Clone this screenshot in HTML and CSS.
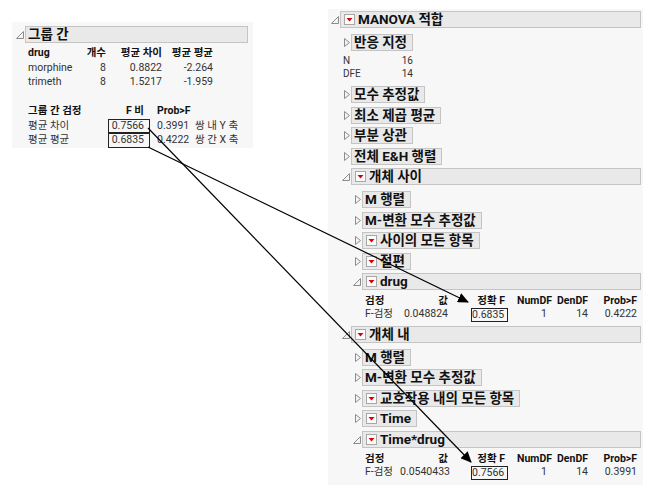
FILE: index.html
```html
<!DOCTYPE html>
<html lang="ko">
<head>
<meta charset="utf-8">
<title>MANOVA</title>
<link rel="stylesheet" href="styles.css">
</head>
<body>
<div class="canvas">
  <div class="panel left-panel">
    <div class="node">
      <div class="head">
        <span class="tri"><svg width="11" height="17" viewBox="0 0 11 17"><polygon points="9.5,5.5 9.5,12.5 2.5,12.5" class="tri-shape"/></svg></span>
        <div class="bar full">그룹 간</div>
      </div>
      <div class="body">
        <div class="grid t1">
          <div class="h">drug</div><div class="h r">개수</div><div class="h r">평균 차이</div><div class="h r">평균 평균</div>
          <div>morphine</div><div class="r">8</div><div class="r">0.8822</div><div class="r">-2.264</div>
          <div>trimeth</div><div class="r">8</div><div class="r">1.5217</div><div class="r">-1.959</div>
        </div>
        <div class="grid t2">
          <div class="h">그룹 간 검정</div><div class="h r fcol">F 비</div><div class="h pcol">Prob&gt;F</div><div></div>
          <div>평균 차이</div><div class="r fcol boxed">0.7566</div><div class="pcol">0.3991</div><div class="note">쌍 내 Y 축</div>
          <div>평균 평균</div><div class="r fcol boxed">0.6835</div><div class="pcol">0.4222</div><div class="note">쌍 간 X 축</div>
        </div>
      </div>
    </div>
  </div>

  <div class="panel right-panel">
    <div class="node">
      <div class="head">
        <span class="tri"><svg width="11" height="17" viewBox="0 0 11 17"><polygon points="9.5,5.5 9.5,12.5 2.5,12.5" class="tri-shape"/></svg></span>
        <div class="bar full"><span class="menu"><svg width="11" height="11" viewBox="0 0 11 11"><rect x="0.5" y="0.5" width="10" height="10" class="menu-box"/><polygon points="2.5,4 8.5,4 5.5,7.5" class="menu-arrow"/></svg></span>MANOVA 적합</div>
      </div>
      <div class="body">
        <div class="node">
          <div class="head">
            <span class="tri"><svg width="11" height="17" viewBox="0 0 11 17"><polygon points="4.5,4.5 9.5,8.5 4.5,12.5" class="tri-shape"/></svg></span>
            <div class="bar btn">반응 지정</div>
          </div>
        </div>
        <div class="kv">
          <div>N</div><div class="r">16</div>
          <div>DFE</div><div class="r">14</div>
        </div>
        <div class="node">
          <div class="head">
            <span class="tri"><svg width="11" height="17" viewBox="0 0 11 17"><polygon points="4.5,4.5 9.5,8.5 4.5,12.5" class="tri-shape"/></svg></span>
            <div class="bar btn">모수 추정값</div>
          </div>
        </div>
        <div class="node">
          <div class="head">
            <span class="tri"><svg width="11" height="17" viewBox="0 0 11 17"><polygon points="4.5,4.5 9.5,8.5 4.5,12.5" class="tri-shape"/></svg></span>
            <div class="bar btn">최소 제곱 평균</div>
          </div>
        </div>
        <div class="node">
          <div class="head">
            <span class="tri"><svg width="11" height="17" viewBox="0 0 11 17"><polygon points="4.5,4.5 9.5,8.5 4.5,12.5" class="tri-shape"/></svg></span>
            <div class="bar btn">부분 상관</div>
          </div>
        </div>
        <div class="node">
          <div class="head">
            <span class="tri"><svg width="11" height="17" viewBox="0 0 11 17"><polygon points="4.5,4.5 9.5,8.5 4.5,12.5" class="tri-shape"/></svg></span>
            <div class="bar btn">전체 E&amp;H 행렬</div>
          </div>
        </div>

        <div class="node">
          <div class="head">
            <span class="tri"><svg width="11" height="17" viewBox="0 0 11 17"><polygon points="9.5,5.5 9.5,12.5 2.5,12.5" class="tri-shape"/></svg></span>
            <div class="bar full"><span class="menu"><svg width="11" height="11" viewBox="0 0 11 11"><rect x="0.5" y="0.5" width="10" height="10" class="menu-box"/><polygon points="2.5,4 8.5,4 5.5,7.5" class="menu-arrow"/></svg></span>개체 사이</div>
          </div>
          <div class="body">
            <div class="node">
              <div class="head">
                <span class="tri"><svg width="11" height="17" viewBox="0 0 11 17"><polygon points="4.5,4.5 9.5,8.5 4.5,12.5" class="tri-shape"/></svg></span>
                <div class="bar btn">M 행렬</div>
              </div>
            </div>
            <div class="node">
              <div class="head">
                <span class="tri"><svg width="11" height="17" viewBox="0 0 11 17"><polygon points="4.5,4.5 9.5,8.5 4.5,12.5" class="tri-shape"/></svg></span>
                <div class="bar btn">M-변환 모수 추정값</div>
              </div>
            </div>
            <div class="node">
              <div class="head">
                <span class="tri"><svg width="11" height="17" viewBox="0 0 11 17"><polygon points="4.5,4.5 9.5,8.5 4.5,12.5" class="tri-shape"/></svg></span>
                <div class="bar btn"><span class="menu"><svg width="11" height="11" viewBox="0 0 11 11"><rect x="0.5" y="0.5" width="10" height="10" class="menu-box"/><polygon points="2.5,4 8.5,4 5.5,7.5" class="menu-arrow"/></svg></span>사이의 모든 항목</div>
              </div>
            </div>
            <div class="node">
              <div class="head">
                <span class="tri"><svg width="11" height="17" viewBox="0 0 11 17"><polygon points="4.5,4.5 9.5,8.5 4.5,12.5" class="tri-shape"/></svg></span>
                <div class="bar btn"><span class="menu"><svg width="11" height="11" viewBox="0 0 11 11"><rect x="0.5" y="0.5" width="10" height="10" class="menu-box"/><polygon points="2.5,4 8.5,4 5.5,7.5" class="menu-arrow"/></svg></span>절편</div>
              </div>
            </div>
            <div class="node">
              <div class="head">
                <span class="tri"><svg width="11" height="17" viewBox="0 0 11 17"><polygon points="9.5,5.5 9.5,12.5 2.5,12.5" class="tri-shape"/></svg></span>
                <div class="bar full"><span class="menu"><svg width="11" height="11" viewBox="0 0 11 11"><rect x="0.5" y="0.5" width="10" height="10" class="menu-box"/><polygon points="2.5,4 8.5,4 5.5,7.5" class="menu-arrow"/></svg></span>drug</div>
              </div>
              <div class="body">
                <div class="ftable">
                  <div class="h">검정</div><div class="h r c2">값</div><div class="h r c3">정확 F</div><div class="h r">NumDF</div><div class="h r">DenDF</div><div class="h r">Prob&gt;F</div>
                  <div class="d">F-검정</div><div class="d r c2">0.048824</div><div class="d r c3 boxed">0.6835</div><div class="d r c4">1</div><div class="d r">14</div><div class="d r">0.4222</div>
                </div>
              </div>
            </div>
          </div>
        </div>

        <div class="node">
          <div class="head">
            <span class="tri"><svg width="11" height="17" viewBox="0 0 11 17"><polygon points="9.5,5.5 9.5,12.5 2.5,12.5" class="tri-shape"/></svg></span>
            <div class="bar full"><span class="menu"><svg width="11" height="11" viewBox="0 0 11 11"><rect x="0.5" y="0.5" width="10" height="10" class="menu-box"/><polygon points="2.5,4 8.5,4 5.5,7.5" class="menu-arrow"/></svg></span>개체 내</div>
          </div>
          <div class="body">
            <div class="node">
              <div class="head">
                <span class="tri"><svg width="11" height="17" viewBox="0 0 11 17"><polygon points="4.5,4.5 9.5,8.5 4.5,12.5" class="tri-shape"/></svg></span>
                <div class="bar btn">M 행렬</div>
              </div>
            </div>
            <div class="node">
              <div class="head">
                <span class="tri"><svg width="11" height="17" viewBox="0 0 11 17"><polygon points="4.5,4.5 9.5,8.5 4.5,12.5" class="tri-shape"/></svg></span>
                <div class="bar btn">M-변환 모수 추정값</div>
              </div>
            </div>
            <div class="node">
              <div class="head">
                <span class="tri"><svg width="11" height="17" viewBox="0 0 11 17"><polygon points="4.5,4.5 9.5,8.5 4.5,12.5" class="tri-shape"/></svg></span>
                <div class="bar btn"><span class="menu"><svg width="11" height="11" viewBox="0 0 11 11"><rect x="0.5" y="0.5" width="10" height="10" class="menu-box"/><polygon points="2.5,4 8.5,4 5.5,7.5" class="menu-arrow"/></svg></span>교호작용 내의 모든 항목</div>
              </div>
            </div>
            <div class="node">
              <div class="head">
                <span class="tri"><svg width="11" height="17" viewBox="0 0 11 17"><polygon points="4.5,4.5 9.5,8.5 4.5,12.5" class="tri-shape"/></svg></span>
                <div class="bar btn"><span class="menu"><svg width="11" height="11" viewBox="0 0 11 11"><rect x="0.5" y="0.5" width="10" height="10" class="menu-box"/><polygon points="2.5,4 8.5,4 5.5,7.5" class="menu-arrow"/></svg></span>Time</div>
              </div>
            </div>
            <div class="node">
              <div class="head">
                <span class="tri"><svg width="11" height="17" viewBox="0 0 11 17"><polygon points="9.5,5.5 9.5,12.5 2.5,12.5" class="tri-shape"/></svg></span>
                <div class="bar full"><span class="menu"><svg width="11" height="11" viewBox="0 0 11 11"><rect x="0.5" y="0.5" width="10" height="10" class="menu-box"/><polygon points="2.5,4 8.5,4 5.5,7.5" class="menu-arrow"/></svg></span>Time*drug</div>
              </div>
              <div class="body">
                <div class="ftable">
                  <div class="h">검정</div><div class="h r c2">값</div><div class="h r c3">정확 F</div><div class="h r">NumDF</div><div class="h r">DenDF</div><div class="h r">Prob&gt;F</div>
                  <div class="d">F-검정</div><div class="d r c2">0.0540433</div><div class="d r c3 boxed">0.7566</div><div class="d r c4">1</div><div class="d r">14</div><div class="d r">0.3991</div>
                </div>
              </div>
            </div>
          </div>
        </div>
      </div>
    </div>
  </div>

  <svg class="arrows" width="659" height="485" viewBox="0 0 659 485">
    <defs>
      <marker id="ah" markerWidth="11" markerHeight="10" refX="10" refY="5" orient="auto" markerUnits="userSpaceOnUse">
        <polygon points="0,0 11,5 0,10" fill="#000"/>
      </marker>
    </defs>
    <line x1="148" y1="128" x2="471" y2="462" stroke="#000" stroke-width="1.2" marker-end="url(#ah)"/>
    <line x1="148" y1="147" x2="468" y2="302" stroke="#000" stroke-width="1.2" marker-end="url(#ah)"/>
  </svg>
</div>
</body>
</html>
```

FILE: styles.css
```css
html, body {
  margin: 0;
  padding: 0;
  background: #ffffff;
}

body {
  font-family: Roboto, "Noto Sans CJK KR", sans-serif;
  color: #333333;
  font-size: 10.5px;
}

.canvas {
  position: relative;
  width: 659px;
  height: 485px;
  overflow: hidden;
  display: flex;
  align-items: flex-start;
}

.panel {
  box-sizing: border-box;
  background: #f7f7f7;
}

.left-panel {
  margin: 22px 0 0 12px;
  width: 241px;
  height: 126px;
  padding: 4px 5px 0 2px;
}

.right-panel {
  margin: 9px 0 0 75px;
  width: 315px;
  height: 476px;
  padding: 2px 2px 0 1px;
}

.node {
  display: flex;
  flex-direction: column;
}

.head {
  display: flex;
  align-items: center;
  height: 17px;
}

.tri {
  width: 11px;
  height: 17px;
  flex: none;
  display: block;
}

.tri svg {
  display: block;
}

.tri-shape {
  fill: #f4f4f4;
  stroke: #8c8c8c;
  stroke-width: 1;
}

.bar {
  box-sizing: border-box;
  height: 17px;
  line-height: 15px;
  border: 1px solid #c4c4c4;
  background: #e9e9e9;
  font-size: 13.5px;
  font-weight: 700;
  color: #111111;
  white-space: nowrap;
  display: flex;
  align-items: center;
  padding-left: 2px;
}

.bar.full {
  flex: 1;
}

.bar.btn {
  flex: none;
  padding-right: 5px;
}

.menu {
  display: block;
  width: 11px;
  height: 11px;
  margin: 0 3px 0 1px;
  flex: none;
}

.menu svg {
  display: block;
}

.menu-box {
  fill: #fbfbfb;
  stroke: #a8a8a8;
  stroke-width: 1;
}

.menu-arrow {
  fill: #e00000;
}

.body {
  margin-left: 11px;
  display: flex;
  flex-direction: column;
}

.body > * {
  margin-top: 3.5px;
}

.body > :first-child {
  margin-top: 6px;
}

/* left tables */
.grid {
  display: grid;
  padding-left: 3px;
  grid-auto-rows: 14.5px;
  line-height: 14.5px;
  white-space: nowrap;
}

.left-panel .body > :first-child {
  margin-top: 3px;
}

.left-panel .body > .t2 {
  margin-top: 14.5px;
}

.t1 {
  grid-template-columns: 58px 20px 56px 51px;
}

.t2 {
  grid-template-columns: 80px 42px 42px 60px;
}

.h {
  font-weight: 700;
  color: #111111;
}

.r {
  text-align: right;
}

.fcol {
  padding-right: 6px;
}

.pcol {
  padding-left: 7px;
}

.note {
  padding-left: 3px;
}

.boxed {
  box-sizing: border-box;
  border: 1px solid #222222;
  line-height: 12.5px;
}

.t2 .boxed {
  padding-right: 5px;
}

/* N / DFE */
.kv {
  display: grid;
  grid-template-columns: 50px 20px;
  grid-auto-rows: 12.5px;
  line-height: 12.5px;
  padding-left: 3px;
  font-size: 10px;
}

.body > .kv {
  margin-top: 4px;
}

.body > .kv + .node {
  margin-top: 6px;
}

/* F test tables */
.ftable {
  display: grid;
  grid-template-columns: 35px 71px 37px 44px 36px 49px;
  grid-template-rows: 13px 14px;
  row-gap: 1px;
  padding-left: 3px;
  white-space: nowrap;
}

.body > .ftable,
.body > .ftable:first-child {
  margin-top: 4px;
}

.ftable > div {
  line-height: 13px;
}

.ftable .d {
  line-height: 12px;
}

.ftable .c2 {
  padding-right: 23px;
}

.ftable .c3 {
  padding-right: 3px;
}

.ftable .c4 {
  padding-right: 5px;
}

.arrows {
  position: absolute;
  left: 0;
  top: 0;
  pointer-events: none;
}
```
